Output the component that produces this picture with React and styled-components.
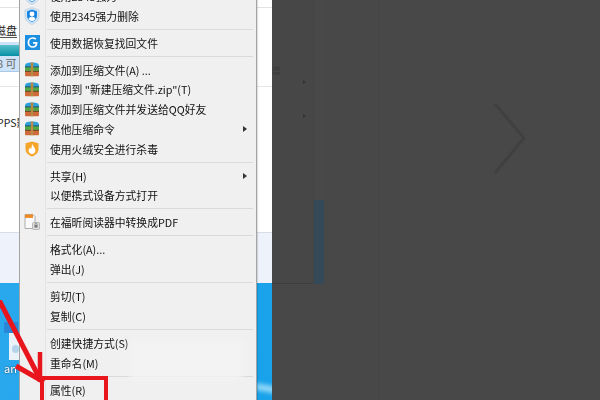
import React from 'react'
import styled, { createGlobalStyle } from 'styled-components'

const GlobalStyle = createGlobalStyle`
  html, body {
    margin: 0;
    padding: 0;
    background: #484848;
  }
`

const items = [
  { text: '使用2345强力', icon: 'shield' },
  { text: '使用2345强力删除', icon: 'shield', sep: true },
  { text: '使用数据恢复找回文件', icon: 'g', sep: true },
  { text: '添加到压缩文件(A) ...', icon: 'rar' },
  { text: '添加到 "新建压缩文件.zip"(T)', icon: 'rar' },
  { text: '添加到压缩文件并发送给QQ好友', icon: 'rar' },
  { text: '其他压缩命令', icon: 'rar', more: true },
  { text: '使用火绒安全进行杀毒', icon: 'fire', sep: true },
  { text: '共享(H)', more: true },
  { text: '以便携式设备方式打开', sep: true },
  { text: '在福昕阅读器中转换成PDF', icon: 'pdf', sep: true },
  { text: '格式化(A)...' },
  { text: '弹出(J)', sep: true },
  { text: '剪切(T)' },
  { text: '复制(C)', sep: true },
  { text: '创建快捷方式(S)' },
  { text: '重命名(M)', sep: true },
  { text: '属性(R)' }
]

function ShieldIcon() {
  return (
    <svg width="16" height="18" viewBox="0 0 16 18">
      <path d="M8 0.5 L15 3 V9 C15 13.5 11.5 16 8 17.5 C4.5 16 1 13.5 1 9 V3 Z" fill="#d6e6f5" stroke="#a9c4dc" strokeWidth="0.6" />
      <path d="M8 2.5 L13 4.2 V9 C13 12 10.5 14 8 15.3 C5.5 14 3 12 3 9 V4.2 Z" fill="#1a86e4" />
      <circle cx="8" cy="7" r="2.4" fill="#fff" />
      <path d="M4.6 12.2 C5 10.4 6.4 9.8 8 9.8 C9.6 9.8 11 10.4 11.4 12.2 C10.2 13.4 9 14 8 14.4 C7 14 5.8 13.4 4.6 12.2 Z" fill="#fff" />
    </svg>
  )
}

function GIcon() {
  return (
    <svg width="15" height="15" viewBox="0 0 15 15">
      <rect width="15" height="15" fill="#1c8fe0" />
      <path d="M10.8 4.2 C9.8 3.3 8.8 3 7.6 3 C5.2 3 3.4 5 3.4 7.5 C3.4 10 5.3 12 7.7 12 C9.9 12 11.6 10.4 11.6 7.8 H8" fill="none" stroke="#fff" strokeWidth="1.7" />
    </svg>
  )
}

function RarIcon() {
  return (
    <svg width="16" height="15" viewBox="0 0 16 15">
      <path d="M1 4 C1 1.5 3 0.5 8 0.5 C13 0.5 15 1.5 15 4 V5 H1 Z" fill="#2f9fd8" />
      <rect x="1" y="5" width="14" height="4.6" fill="#4fa845" />
      <rect x="1" y="9.6" width="14" height="4.6" rx="1" fill="#cf6a3a" />
      <rect x="1" y="8.8" width="14" height="1.2" fill="#7b4a2a" />
      <rect x="1" y="4.4" width="14" height="1" fill="#24506e" />
      <rect x="6.8" y="0.5" width="2.4" height="13.7" fill="#b98a45" />
    </svg>
  )
}

function FireIcon() {
  return (
    <svg width="14" height="16" viewBox="0 0 14 16">
      <path d="M7 0.5 L13.5 2.2 V8 C13.5 11.8 10.5 14.2 7 15.5 C3.5 14.2 0.5 11.8 0.5 8 V2.2 Z" fill="#f5a52a" />
      <path d="M7.4 3 C8 5.6 10.4 6.6 10.4 9.6 C10.4 11.6 8.8 13 7 13 C5.2 13 3.6 11.6 3.6 9.8 C3.6 8.2 4.6 7.4 5.2 6.4 C5.6 7.2 5.8 7.6 6.3 7.9 C6.6 6.4 6.6 4.6 7.4 3 Z" fill="#fff" />
    </svg>
  )
}

function PdfIcon() {
  return (
    <svg width="16" height="16" viewBox="0 0 16 16">
      <path d="M1 0.5 H9 L11 2.5 V14.5 H1 Z" fill="#fafafa" stroke="#9a9a9a" strokeWidth="0.8" />
      <rect x="1" y="0.5" width="8" height="3.4" fill="#ef8a22" />
      <rect x="8.5" y="8.5" width="7" height="7" rx="1" fill="#dedede" stroke="#9a9a9a" strokeWidth="0.6" />
      <rect x="10.5" y="11" width="3" height="2.6" fill="#777" />
      <path d="M10.9 11 V10 C10.9 9 13.1 9 13.1 10 V11" fill="none" stroke="#777" strokeWidth="0.7" />
    </svg>
  )
}

const icons = {
  shield: <ShieldIcon />,
  g: <GIcon />,
  rar: <RarIcon />,
  fire: <FireIcon />,
  pdf: <PdfIcon />
}

export default function App() {
  return (
    <>
      <GlobalStyle />
      <Page>
        <Screen>
          <Explorer>
            <TopRule />
            <DriveLabel>磁盘</DriveLabel>
            <DriveSelected>
              <DriveBar />
              <DriveFree>8 可</DriveFree>
            </DriveSelected>
            <MidRule />
            <PpsLabel>PPS影</PpsLabel>
          </Explorer>
          <StatusBar />
          <Desktop>
            <FileBadge />
            <DesktopFile />
            <FileName>an</FileName>
            <Streak />
          </Desktop>

          <Menu>
            {items.map((item, i) => (
              <React.Fragment key={i}>
                <Row>
                  <IconSlot>{icons[item.icon]}</IconSlot>
                  <Label>{item.text}</Label>
                  {item.more && <MoreArrow />}
                </Row>
                {item.sep && <Separator />}
              </React.Fragment>
            ))}
            <Smudge />
          </Menu>

          <Arrows width="60" height="100" viewBox="0 0 60 100">
            <path d="M-2 -2 L41 81" stroke="#e9151d" strokeWidth="5" fill="none" />
            <path d="M16 66 L44 82" stroke="#e9151d" strokeWidth="5" fill="none" />
            <path d="M40 52 V82" stroke="#e9151d" strokeWidth="4.5" fill="none" />
          </Arrows>
          <RedBox />
        </Screen>

        <Dim>
          <DimPane>
            <DimWord>度</DimWord>
            <DimArrow />
            <DimArrow />
          </DimPane>
          <DimScroll>
            <DimThumb />
          </DimScroll>
          <DimGap />
          <NextZone>
            <svg width="36" height="76" viewBox="0 0 36 76">
              <path d="M3 3 L32 37 L3 72" fill="none" stroke="#404040" strokeWidth="3" />
            </svg>
          </NextZone>
        </Dim>
      </Page>
    </>
  )
}

const Page = styled.div`
  display: flex;
  width: 600px;
  height: 400px;
  overflow: hidden;
  font-family: "Noto Sans CJK SC", "Liberation Sans", sans-serif;
  filter: blur(0.45px);
`
const Screen = styled.div`
  position: relative;
  display: flex;
  flex-direction: column;
  width: 272px;
  height: 400px;
  flex: none;
  overflow: hidden;
`
const Explorer = styled.div`
  height: 232px;
  background: #fff;
  font-size: 11px;
  color: #222;
  overflow: hidden;
`
const TopRule = styled.div`
  height: 1px;
  margin-top: 7px;
  background: #e2e2e2;
`
const DriveLabel = styled.div`
  margin: 16px 0 0 -5px;
  width: 22px;
  height: 13px;
  line-height: 13px;
  white-space: nowrap;
  border-bottom: 1px solid #555;
`
const DriveSelected = styled.div`
  margin-top: 4px;
  width: 19px;
  height: 30px;
  padding-top: 3px;
  box-sizing: border-box;
  background: #cfe3f8;
  border-bottom: 1px solid #a9c9ea;
`
const DriveBar = styled.div`
  height: 11px;
  background: linear-gradient(#58c0cc, #078fa3);
`
const DriveFree = styled.div`
  margin: 1px 0 0 -3px;
  line-height: 13px;
  color: #666;
  white-space: nowrap;
`
const MidRule = styled.div`
  height: 1px;
  margin-top: 14px;
  background: #e6e6e6;
`
const PpsLabel = styled.div`
  margin: 29px 0 0 -3px;
  font-size: 10.5px;
  line-height: 14px;
  white-space: nowrap;
`
const StatusBar = styled.div`
  height: 51px;
  background: #eef3fb;
  border-top: 1px solid #d5dee9;
  box-sizing: border-box;
`
const Desktop = styled.div`
  position: relative;
  flex: 1;
  padding: 39px 0 0 4px;
  background: linear-gradient(100deg, #2aa8ee, #18a2ea);
  overflow: hidden;
`
const FileBadge = styled.div`
  width: 14px;
  height: 11px;
  background: #2a87d8;
`
const DesktopFile = styled.div`
  position: relative;
  width: 12px;
  height: 27px;
  margin-left: 5px;
  background: #e9f2f8;

  &::after {
    content: '';
    position: absolute;
    top: 12px;
    left: 3px;
    width: 7px;
    height: 8px;
    border-radius: 50%;
    background: #b5d3e8;
  }
`
const FileName = styled.div`
  margin-top: 1px;
  font-size: 11px;
  line-height: 14px;
  color: #fff;
  text-shadow: 0 0 2px #234;
`
const Streak = styled.div`
  position: absolute;
  right: -6px;
  bottom: 8px;
  width: 22px;
  height: 7px;
  background: #8fd6f7;
  filter: blur(2px);
  transform: rotate(10deg);
`
const Menu = styled.div`
  position: absolute;
  top: -14px;
  left: 19px;
  box-sizing: border-box;
  width: 238px;
  height: 440px;
  background: #f0f0f0;
  border: 1px solid #a4a4a4;
  border-top: none;
  box-shadow: 1px 0 1px rgba(0, 0, 0, 0.12);

  &::before {
    content: '';
    position: absolute;
    top: 0;
    bottom: 0;
    left: 25px;
    width: 1px;
    background: #e4e4e4;
  }
`
const Row = styled.div`
  display: flex;
  align-items: center;
  height: 19.8px;
  padding-left: 4px;
  font-size: 10.8px;
  color: #111;
  white-space: nowrap;
`
const IconSlot = styled.div`
  display: flex;
  align-items: center;
  justify-content: center;
  width: 16px;
  height: 18px;
  margin-right: 10px;
  flex: none;
`
const Label = styled.span`
  flex: 1;
`
const MoreArrow = styled.span`
  width: 0;
  height: 0;
  margin-right: 9px;
  border-left: 4px solid #333;
  border-top: 3.5px solid transparent;
  border-bottom: 3.5px solid transparent;
`
const Separator = styled.div`
  height: 1px;
  margin: 3px 3px 3.15px 27px;
  background: #dadada;
`
const Smudge = styled.div`
  position: absolute;
  top: 354px;
  left: 110px;
  width: 112px;
  height: 40px;
  background: #f3f3f3;
  filter: blur(3px);
`
const Arrows = styled.svg`
  position: absolute;
  top: 300px;
  left: 0;
`
const RedBox = styled.div`
  position: absolute;
  top: 376px;
  left: 40px;
  width: 60px;
  height: 40px;
  border: 4px solid #e9151d;
`
const Dim = styled.div`
  display: flex;
  flex: 1;
  height: 400px;
  background: #484848;
`
const DimPane = styled.div`
  display: flex;
  flex-direction: column;
  align-items: flex-end;
  box-sizing: border-box;
  width: 41px;
  height: 284px;
  padding: 65px 7px 0 0;
  background: #474747;
  border-bottom: 1px solid #3d3d3d;
`
const DimWord = styled.div`
  align-self: flex-start;
  font-size: 9px;
  line-height: 12px;
  color: #3a3a3a;
`
const DimArrow = styled.div`
  width: 0;
  height: 0;
  margin-bottom: 27px;
  margin-top: 3px;
  border-left: 3px solid #333;
  border-top: 2.5px solid transparent;
  border-bottom: 2.5px solid transparent;
`
const DimScroll = styled.div`
  box-sizing: border-box;
  width: 11px;
  height: 284px;
  padding-top: 200px;
  background: #494949;
  border-left: 1px solid #434343;
`
const DimThumb = styled.div`
  height: 84px;
  background: #344a58;
`
const DimGap = styled.div`
  width: 55px;
  border-right: 1px solid #444;
`
const NextZone = styled.div`
  padding: 101px 0 0 112px;
`
